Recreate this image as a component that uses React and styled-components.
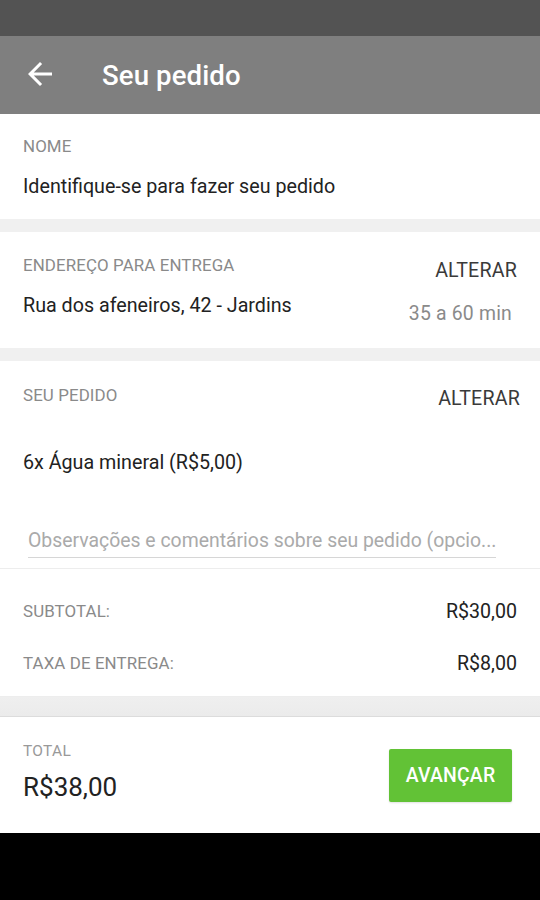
import React from "react";
import styled, { createGlobalStyle } from "styled-components";

const GlobalStyle = createGlobalStyle`
  html, body { margin: 0; padding: 0; background: #000; }
  body { font-family: Roboto, "Noto Sans", "Liberation Sans", sans-serif; -webkit-font-smoothing: antialiased; }
  * { box-sizing: border-box; }
`;

const Screen = styled.div`
  width: 540px;
  height: 900px;
  display: flex;
  flex-direction: column;
  background: #000;
  overflow: hidden;
`;

const StatusBar = styled.div`
  height: 36px;
  flex: none;
  background: #535353;
`;

const AppBar = styled.header`
  height: 78px;
  flex: none;
  background: #7f7f7f;
  display: flex;
  align-items: center;
  padding-left: 22px;
  gap: 44px;
`;

const BackButton = styled.button`
  border: 0;
  background: none;
  padding: 0;
  width: 36px;
  height: 36px;
  display: flex;
  align-items: center;
  justify-content: center;
  color: #fff;
  margin-top: -3px;
`;

const Title = styled.h1`
  margin: 0;
  font-size: 27.6px;
  font-weight: 500;
  color: #fff;
  letter-spacing: 0.1px;
`;

const Content = styled.main`
  flex: 1;
  background: linear-gradient(to bottom, #f0f0f0 0, #f0f0f0 96%, #ebebeb 100%);
  display: flex;
  flex-direction: column;
  gap: 13px;
`;

const Section = styled.section`
  background: #fff;
  padding: ${(p) => p.$pad || "22px 23px 20px"};
`;

const Label = styled.div`
  font-size: 16.9px;
  line-height: 20px;
  color: #8a8a8a;
  text-transform: uppercase;
  letter-spacing: 0.1px;
`;

const Value = styled.div`
  font-size: 19.7px;
  line-height: 24px;
  color: #222;
  margin-top: ${(p) => p.$mt || 19}px;
`;

const Split = styled.div`
  display: flex;
  justify-content: space-between;
  align-items: flex-start;
`;

const Side = styled.div`
  display: flex;
  flex-direction: column;
  align-items: flex-end;
  padding-top: ${(p) => p.$pt || 0}px;
`;

const Action = styled.button`
  border: 0;
  background: none;
  padding: 0;
  font-family: inherit;
  font-size: 19.6px;
  line-height: 24px;
  font-weight: 400;
  color: #3a3a3a;
  letter-spacing: 0.2px;
`;

const Meta = styled.div`
  font-size: 19.4px;
  line-height: 24px;
  color: #8a8a8a;
  margin-top: 19px;
  margin-right: 5px;
  letter-spacing: 0.2px;
`;

const OrderBody = styled.div`
  padding: 24px 20px 0 23px;
`;

const NoteField = styled.input`
  display: block;
  width: 468px;
  margin: 50px 0 10px 5px;
  border: 0;
  border-bottom: 1.5px solid #d6d6d6;
  padding: 4px 0 4px;
  font-family: inherit;
  font-size: 19.4px;
  line-height: 24px;
  color: #222;
  outline: none;
  background: transparent;
  &::placeholder { color: #aaa; }
`;

const Totals = styled.div`
  border-top: 1px solid #ededed;
  border-bottom: 1px solid #ededed;
  padding: 30px 23px 21px;
  display: flex;
  flex-direction: column;
  gap: 28px;
`;

const TotalRow = styled.div`
  display: flex;
  justify-content: space-between;
  align-items: center;
  height: 24px;
`;

const Amount = styled.span`
  font-size: 19.6px;
  color: #222;
`;

const BottomBar = styled.footer`
  height: 117px;
  flex: none;
  background: #fff;
  border-top: 1px solid #dcdcdc;
  display: flex;
  align-items: center;
  justify-content: space-between;
  padding: 0 28px 0 23px;
`;

const TotalBox = styled.div`
  display: flex;
  flex-direction: column;
  gap: 10px;
  margin-top: -7px;
`;

const TotalLabel = styled.div`
  font-size: 15.5px;
  line-height: 20px;
  color: #999;
  letter-spacing: 0.3px;
`;

const TotalValue = styled.div`
  font-size: 26px;
  line-height: 32px;
  color: #222;
`;

const PrimaryButton = styled.button`
  width: 123px;
  height: 53px;
  border: 0;
  border-radius: 2px;
  background: #62c236;
  color: #fff;
  font-family: inherit;
  font-size: 19.4px;
  font-weight: 500;
  letter-spacing: 0.2px;
  box-shadow: 0 1px 2px rgba(0, 0, 0, 0.12);
  margin-top: 1px;
`;

const NavBar = styled.div`
  height: 67px;
  flex: none;
  background: #000;
`;

const ArrowBack = () => (
  <svg width="36" height="36" viewBox="0 0 24 24" fill="currentColor">
    <path d="M20 11H7.83l5.59-5.59L12 4l-8 8 8 8 1.41-1.41L7.83 13H20v-2z" />
  </svg>
);

export default function App() {
  return (
    <>
      <GlobalStyle />
      <Screen>
        <StatusBar />
        <AppBar>
          <BackButton aria-label="Voltar">
            <ArrowBack />
          </BackButton>
          <Title>Seu pedido</Title>
        </AppBar>
        <Content>
          <Section>
            <Label>Nome</Label>
            <Value>Identifique-se para fazer seu pedido</Value>
          </Section>
          <Section $pad="23px 23px 22px">
            <Split>
              <div>
                <Label>Endereço para entrega</Label>
                <Value>Rua dos afeneiros, 42 - Jardins</Value>
              </div>
              <Side $pt={4}>
                <Action>ALTERAR</Action>
                <Meta>35 a 60 min</Meta>
              </Side>
            </Split>
          </Section>
          <Section $pad="0">
            <OrderBody>
              <Split>
                <Label>Seu pedido</Label>
                <Side $pt={2}>
                  <Action>ALTERAR</Action>
                </Side>
              </Split>
              <Value $mt={40}>6x Água mineral (R$5,00)</Value>
              <NoteField placeholder="Observações e comentários sobre seu pedido (opcio..." />
            </OrderBody>
            <Totals>
              <TotalRow>
                <Label>Subtotal:</Label>
                <Amount>R$30,00</Amount>
              </TotalRow>
              <TotalRow>
                <Label>Taxa de entrega:</Label>
                <Amount>R$8,00</Amount>
              </TotalRow>
            </Totals>
          </Section>
        </Content>
        <BottomBar>
          <TotalBox>
            <TotalLabel>TOTAL</TotalLabel>
            <TotalValue>R$38,00</TotalValue>
          </TotalBox>
          <PrimaryButton>AVANÇAR</PrimaryButton>
        </BottomBar>
        <NavBar />
      </Screen>
    </>
  );
}
